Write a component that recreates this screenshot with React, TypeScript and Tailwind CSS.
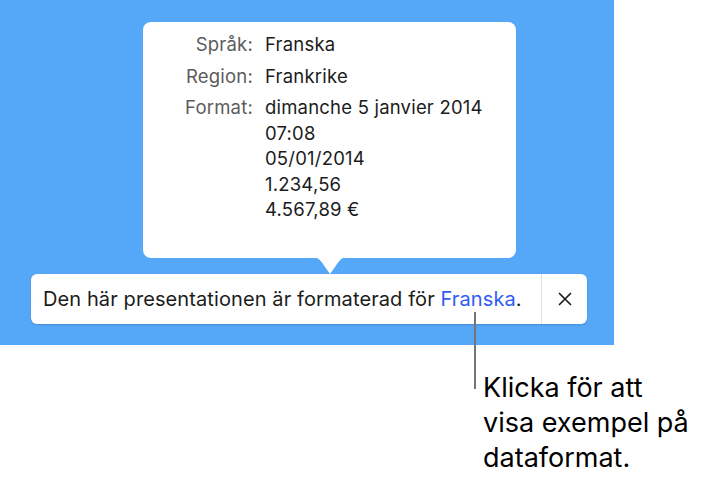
import React from "react";

const font = { fontFamily: '"Inter", "Liberation Sans", sans-serif' };

export default function App() {
  return (
    <div className="relative w-[713px] h-[483px] bg-white overflow-hidden" style={font}>
      <div className="flex flex-col w-[614px] h-[345px] bg-[#55a7f8] pt-[22px]">
        <div className="relative ml-[143px] w-[373px] h-[236px] bg-white rounded-[8px] pt-[10px]">
          <div className="grid grid-cols-[110px_1fr] gap-x-[12px] text-[18.5px] tracking-[0.2px] leading-[25px]">
            <div className="text-right text-[#5c5c5c]">Språk:</div>
            <div className="text-[#1c1c1c]">Franska</div>
            <div className="text-right text-[#5c5c5c] mt-[7px]">Region:</div>
            <div className="text-[#1c1c1c] mt-[7px]">Frankrike</div>
            <div className="text-right text-[#5c5c5c] mt-[6px]">Format:</div>
            <div className="text-[#1c1c1c] mt-[6px] flex flex-col leading-[25.5px]">
              <span>dimanche 5 janvier 2014</span>
              <span>07:08</span>
              <span>05/01/2014</span>
              <span>1.234,56</span>
              <span>4.567,89 €</span>
            </div>
          </div>
          <svg className="absolute left-[168px] top-[235px]" width="38" height="18" viewBox="0 0 38 18">
            <path d="M0 0 H38 C30 0 28 4 24 10 L19 17 L14 10 C10 4 8 0 0 0 Z" fill="#ffffff" />
          </svg>
        </div>
        <div className="ml-[31px] mt-[16px] w-[556px] h-[50px] bg-white rounded-[6px] shadow-[0_1px_2px_rgba(0,0,0,0.15)] flex items-center">
          <div className="flex-1 pl-[12px] text-[20px] tracking-[0.1px] text-[#1c1c1c] whitespace-nowrap">
            Den här presentationen är formaterad för <span className="text-[#2f5cf5]">Franska</span>.
          </div>
          <div className="w-px self-stretch bg-[#e2e2e2]" />
          <div className="w-[45px] flex items-center justify-center">
            <svg width="14" height="14" viewBox="0 0 14 14">
              <path d="M1.5 1.5 L12.5 12.5 M12.5 1.5 L1.5 12.5" stroke="#1c1c1c" strokeWidth="1.7" strokeLinecap="round" />
            </svg>
          </div>
        </div>
      </div>
      <div className="absolute left-[474px] top-[312px] w-[2px] h-[77px] bg-[#767676]" />
      <div className="absolute left-[483px] top-[370px] text-[27px] leading-[35px] text-black">
        <div>Klicka för att</div>
        <div>visa exempel på</div>
        <div>dataformat.</div>
      </div>
    </div>
  );
}
